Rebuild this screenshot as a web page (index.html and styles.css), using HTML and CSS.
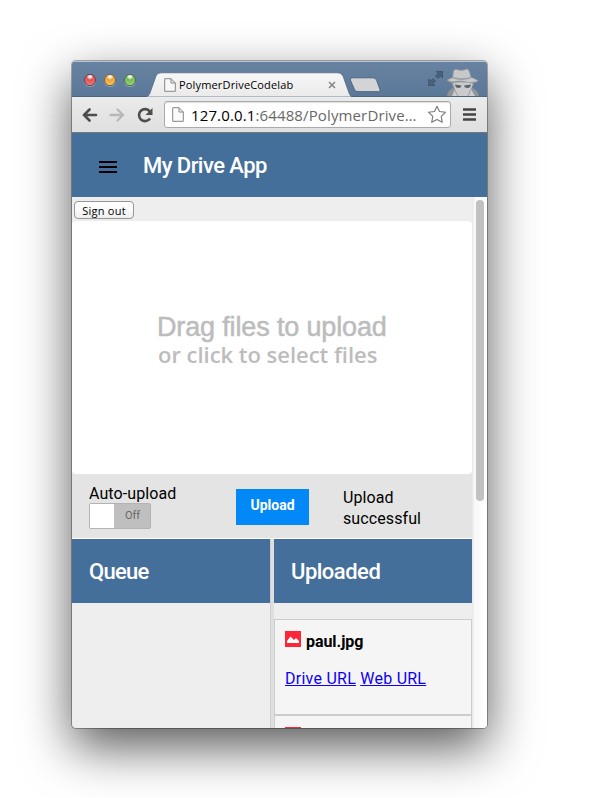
FILE: index.html
```html
<!DOCTYPE html>
<html lang="en">
<head>
<meta charset="utf-8">
<title>PolymerDriveCodelab</title>
<link rel="stylesheet" href="styles.css">
</head>
<body>
<div class="window">
  <div class="titlebar">
    <div class="lights"><i class="light red"></i><i class="light yellow"></i><i class="light green"></i></div>
    <div class="tab">
      <svg class="tab-shape" width="206" height="25" viewBox="0 0 206 25">
        <defs><linearGradient id="tabfill" x1="0" y1="0" x2="0" y2="1"><stop offset="0" stop-color="#f6f6f6"/><stop offset="1" stop-color="#eaeaea"/></linearGradient></defs>
        <path d="M0 25Q3 24 4 21L10 4Q11.500 .8 15 .8H192Q195 .8 197 4L203 21Q204 24 206 25Z" fill="url(#tabfill)" stroke="#4c6583" stroke-width=".7"/>
        <path d="M0 25.500H206" stroke="#ebebeb"/>
      </svg>
      <svg class="tab-page" width="12" height="14" viewBox="0 0 12 14"><path d="M.7.7H7L11.300 5V13.300H.7ZM7 .7V5H11.300" fill="#f8f8f8" stroke="#858585"/></svg>
      <span class="tab-title">PolymerDriveCodelab</span>
      <svg class="tab-close" width="8" height="8" viewBox="0 0 8 8"><path d="M1 1L7 7M7 1L1 7" stroke="#858585" stroke-width="1.500"/></svg>
    </div>
    <svg class="new-tab" width="32" height="16" viewBox="0 0 32 16"><path d="M3.500.8H24Q26.500.8 27.500 3L31 12.500Q31.500 14.700 29.500 14.700H9Q6.500 14.700 5.500 12.500L1.300 3Q.7.8 3.500.8Z" fill="#d2d4d6" stroke="#4e6681"/></svg>
    <svg class="expand" width="15" height="15" viewBox="0 0 15 15"><path d="M8 .5H14.500V7L12.500 5L10 7.500L7.500 5L10 2.500ZM.5 8V14.500H7L5 12.500L7.500 10L5 7.500L2.500 10Z" fill="#4a617b" stroke="#34495f" stroke-width=".6"/></svg>
    <svg class="incognito" width="34" height="28" viewBox="0 0 34 28">
      <path d="M1 28Q2 22 7 20L5 14.500Q0 13.500 1 11.500Q4 10 6 9.500L7 3Q8 0 13 1.500Q17 2 20 .8Q23 .5 24 4L25.500 9.500Q31 10.500 32.500 13Q31 15 28 15L26 20Q32 22 33 28Z" fill="#909499"/>
      <path d="M8 3Q9 1 13 2.500Q18 3 20.500 1.500Q22.500 1 23.500 5L24.500 9.500Q30 11 31.500 13Q28 14.500 22 14Q14 12 8 13.500Q4 14 2 12Q5 10.500 7 10Z" fill="#c6c8ca"/>
      <path d="M7.500 9Q16 11.500 24.500 9V10.500Q16 13.200 7 10.600Z" fill="#9b9fa4"/>
      <path d="M7 15Q16 13.500 27 15.500L25 21L29 28H6L9 21Z" fill="#c9cbcd"/>
      <path d="M9 16.500L15.500 17.500Q15 20 12.500 20Q9.500 20 9 16.500ZM25 16.500L18 17.500Q18.500 20 21.500 20Q24.500 20 25 16.500Z" fill="#5d6369"/>
      <path d="M8 21L12 28M25 21L22 28" fill="none" stroke="#999da1"/>
    </svg>
  </div>
  <div class="toolbar">
    <svg class="back" width="16" height="14" viewBox="0 0 16 14"><path d="M14 7H2M7.500 1.500L2 7L7.500 12.500" fill="none" stroke="#4d4d4d" stroke-width="2.600" stroke-linecap="round"/></svg>
    <svg class="forward" width="16" height="14" viewBox="0 0 16 14"><path d="M1.500 7H13.500M8.500 1.500L14 7L8.500 12.500" fill="none" stroke="#b8b8b8" stroke-width="2.300" stroke-linecap="round"/></svg>
    <svg class="reload" width="16" height="16" viewBox="0 0 16 16"><path d="M12.800 4.500A6 6 0 1 0 13 11.500" fill="none" stroke="#4d4d4d" stroke-width="2.600"/><path d="M15.500 1V8H8.500Z" fill="#4d4d4d"/></svg>
    <div class="omnibox">
      <svg class="page" width="12" height="15" viewBox="0 0 12 15"><path d="M.7.7H7L11.300 5V14.300H.7ZM7 .7V5H11.300" fill="#fafafa" stroke="#858585"/></svg>
      <span class="url"><b>127.0.0.1</b>:64488/PolymerDrive…</span>
      <svg class="star" width="20" height="19" viewBox="0 0 20 19"><path d="M10 1.200L12.500 6.500L18.600 7.200L14.200 11.300L15.300 17.300L10 14.400L4.700 17.300L5.800 11.300L1.400 7.200L7.500 6.500Z" fill="#fff" stroke="#777" stroke-width="1.100" stroke-linejoin="round"/></svg>
    </div>
    <svg class="menu" width="13" height="13" viewBox="0 0 13 13"><path d="M0 1.500H13M0 6.500H13M0 11.500H13" stroke="#444" stroke-width="2.600"/></svg>
  </div>
  <div class="app-header">
    <svg width="18" height="12" viewBox="0 0 18 12"><path d="M0 1H18M0 6H18M0 11H18" stroke="#000" stroke-width="2"/></svg>
    <span class="app-title">My Drive App</span>
  </div>
  <div class="body">
    <div class="main">
      <div class="sign-row"><button class="sign-out"><span>Sign out</span></button></div>
      <div class="dropzone">
        <div class="drag">Drag files to upload</div>
        <div class="click">or click to select files</div>
      </div>
      <div class="controls">
        <div class="auto"><span class="auto-label">Auto-upload</span><div class="toggle"><i></i><span>Off</span></div></div>
        <div class="upload"><span>Upload</span></div>
        <div class="status">Upload<br>successful</div>
      </div>
      <div class="panels">
        <div class="panel"><div class="panel-head"><span class="queue">Queue</span></div></div>
        <div class="divider"></div>
        <div class="panel">
          <div class="panel-head"><span class="uploaded">Uploaded</span></div>
          <div class="card">
            <div class="file"><svg width="16" height="16" viewBox="0 0 16 16"><path d="M0 0H16V16H0Z" fill="#ff2638"/><path d="M2 12V10L5.500 5.500L9 9L11 7L14 10V12Z" fill="#fff"/></svg><b>paul.jpg</b></div>
            <div class="links"><a href="#">Drive URL</a> <a href="#">Web URL</a></div>
          </div>
          <div class="card next"><div class="file"><svg width="16" height="16" viewBox="0 0 16 16"><path d="M0 0H16V16H0Z" fill="#ff2638"/></svg></div></div>
        </div>
      </div>
    </div>
    <div class="scroll"><div class="thumb"></div></div>
  </div>
</div>
</body>
</html>
```

FILE: styles.css
```css
* { box-sizing: border-box; }
body { margin: 0; height: 798px; overflow: hidden; background: #fff; padding: 61px 0 0 72px; font-family: Roboto, sans-serif; color: #000; }
svg { display: block; flex: none; }
.window { width: 415px; height: 667px; border-radius: 4px; overflow: hidden; background: #eee; box-shadow: 0 0 0 1px rgba(0,0,0,.3), 0 19px 50px rgba(0,0,0,.66); display: flex; flex-direction: column; }
.titlebar { height: 36px; flex: none; display: flex; background: linear-gradient(#6883a1, #5c7899); border-top: 1px solid #b9c5d1; border-bottom: 1px solid #4c6583; }
.lights { width: 74px; display: flex; gap: 8px; padding: 12px 0 0 12px; }
.light { width: 12px; height: 12px; border-radius: 50%; border: 1px solid #743f43; box-shadow: 0 1px 0 rgba(255,255,255,.3); }
.red { background: radial-gradient(circle at 50% 15%, #fff 0 8%, #e05256 35%, #ef6a6a 70%, #ffaeae); }
.yellow { border-color: #866330; background: radial-gradient(circle at 50% 15%, #fff 0 8%, #e8a43e 35%, #f4b750 70%, #ffeaa0); }
.green { border-color: #4d7340; background: radial-gradient(circle at 50% 15%, #fff 0 8%, #75ba55 35%, #8acb68 70%, #d4f7ae); }
.tab { position: relative; width: 206px; height: 25px; margin-top: 10px; display: flex; align-items: flex-start; }
.tab-shape { position: absolute; left: 0; top: 0; }
.tab-page { position: relative; margin: 6px 0 0 18px; }
.tab-title { position: relative; width: 114px; margin: 5px 0 0 3px; font: 11px/16px "Open Sans", sans-serif; letter-spacing: .16px; white-space: nowrap; }
.tab-close { position: relative; margin: 9px 0 0 35px; }
.new-tab { margin: 15px 0 0 -3px; }
.expand { margin: 9px 0 0 47px; }
.incognito { margin: 6px 0 0 3px; }
.toolbar { height: 36px; flex: none; display: flex; align-items: center; background: linear-gradient(#ebebeb, #dfdfdf); border-bottom: 1px solid #777; }
.back { margin-left: 10px; }
.forward { margin-left: 11px; }
.reload { margin-left: 12px; }
.omnibox { width: 287px; height: 27px; margin-left: 11px; padding-left: 7px; display: flex; align-items: center; border: 1px solid #aaa; border-radius: 3px; background: #fff; box-shadow: inset 0 1px 1px #ddd; }
.url { width: 230px; margin-left: 7px; font: 15px/20px "Open Sans", sans-serif; color: #686868; white-space: nowrap; letter-spacing: .13px; }
.url b { font-weight: 400; color: #000; }
.star { margin-left: 6px; }
.menu { margin-left: 12px; }
.app-header { height: 64px; flex: none; display: flex; align-items: center; background: #456f9b; color: #fff; padding-left: 27px; }
.app-header svg { margin-top: 4px; }
.app-title { margin: 2px 0 0 26px; font-size: 22px; font-weight: 500; line-height: 26px; letter-spacing: -.55px; }
.body { flex: 1; min-height: 0; display: flex; }
.main { width: 400px; display: flex; flex-direction: column; }
.scroll { width: 15px; background: linear-gradient(90deg, #e7e7e7, #f9f9f9 3px, #fff); padding: 3px 0 0 4px; }
.thumb { width: 8px; height: 301px; border-radius: 4px; background: #c1c1c1; }
.sign-row { height: 24px; flex: none; padding: 4px 0 0 2px; }
.sign-out { display: block; width: 60px; height: 18px; padding: 0; border: 1px solid #979797; border-radius: 4px; background: linear-gradient(#fff, #fafafa 50%, #eee); font: 11px/15px "Open Sans", sans-serif; letter-spacing: .25px; color: #000; }
.dropzone { height: 253px; flex: none; border-radius: 4px; background: #fff; padding: 91px 0 0 85px; color: #bcbcbc; white-space: nowrap; box-shadow: 0 1px 3px #ddd; }
.drag { font: 27px/30px "Liberation Sans", sans-serif; letter-spacing: -.15px; -webkit-text-stroke: .5px #bcbcbc; }
.click { margin: -1px 0 0 1px; font: 600 22px/26px "Open Sans", sans-serif; letter-spacing: -.03px; }
.controls { height: 65px; flex: none; display: flex; background: #e4e4e4; border-bottom: 1px solid #fff; font-size: 16px; letter-spacing: .1px; }
.auto { width: 147px; margin-left: 17px; padding-top: 10px; }
.auto-label { display: block; line-height: 19px; }
.toggle { width: 62px; height: 26px; display: flex; border: 1px solid #b3b3b3; border-radius: 2px; background: #bfbfbf; color: #686868; font-size: 11px; line-height: 24px; letter-spacing: -.1px; }
.toggle i { width: 24px; background: #fff; margin-right: 11px; }
.upload { width: 73px; height: 36px; margin-top: 15px; background: #0288f7; color: #fff; font: 700 14px/33px Roboto, sans-serif; letter-spacing: 0; text-align: center; }
.status { margin: 13px 0 0 34px; line-height: 21px; }
.panels { flex: 1; min-height: 0; display: flex; }
.panel { width: 198px; }
.divider { width: 4px; background: #dfdfdf; border-left: 1px solid #d0d0d0; }
.panel-head { height: 64px; background: #456f9b; color: #fff; padding-left: 17px; font-size: 22px; font-weight: 500; line-height: 65px; letter-spacing: -.5px; }
.queue { letter-spacing: -.7px; }
.card { height: 96px; margin-top: 16px; border: 1px solid #ccc; background: #f5f5f5; padding: 11px 10px; }
.card.next { margin-top: 0; }
.file { display: flex; font-size: 16px; line-height: 22px; letter-spacing: -.05px; }
.file b { margin-left: 5px; }
.links { font-size: 16px; line-height: 20px; margin-top: 16px; white-space: nowrap; letter-spacing: .25px; }
.links a { color: #0e00f5; }
```
